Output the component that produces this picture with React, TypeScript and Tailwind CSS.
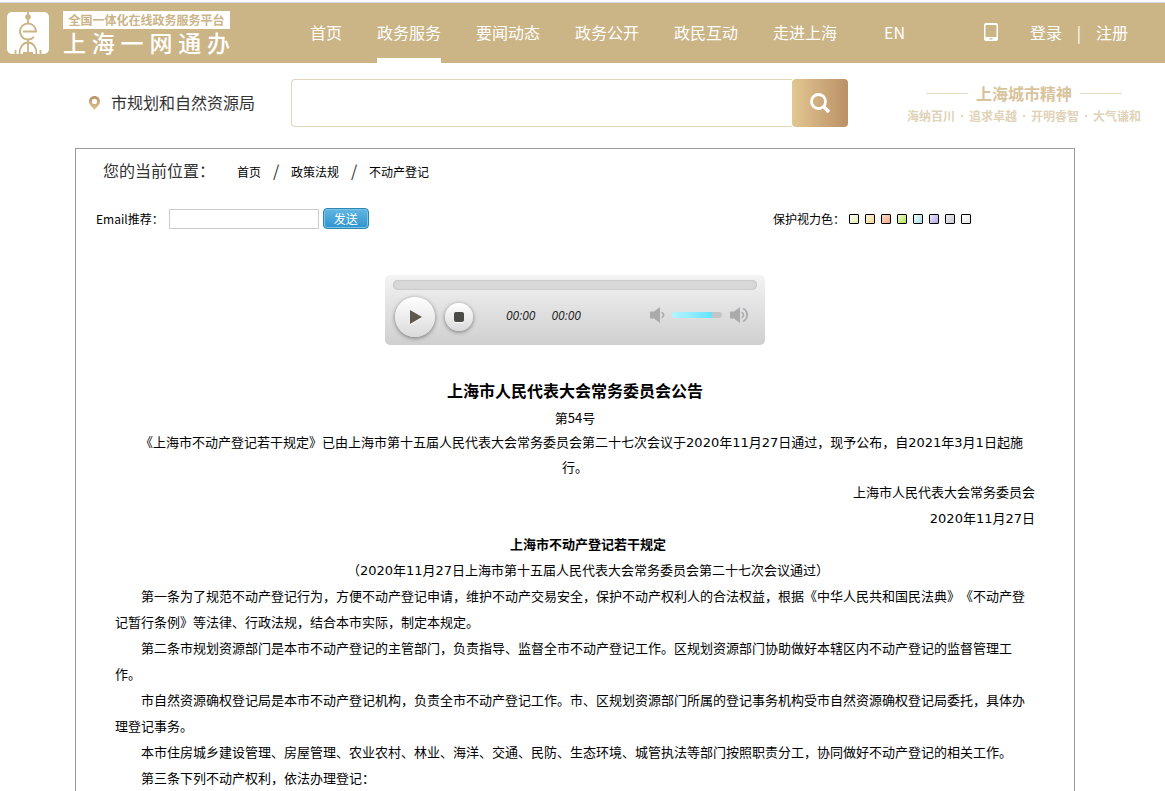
import React from "react";

const navItems = ["首页", "政务服务", "要闻动态", "政务公开", "政民互动", "走进上海"];

const mottoes = ["海纳百川", "追求卓越", "开明睿智", "大气谦和"];

const swatches = [
  { name: "豆绿", cls: "from-white to-[#e3eba6]" },
  { name: "浅黄", cls: "from-[#fdf3dc] to-[#f0d98c]" },
  { name: "浅橙", cls: "from-[#fbdccb] to-[#f4a888]" },
  { name: "草绿", cls: "from-[#f2fbd2] to-[#b4e04a]" },
  { name: "浅蓝", cls: "from-[#eefafa] to-[#a9dfe6]" },
  { name: "浅紫", cls: "from-[#eeeafa] to-[#b3a4e4]" },
  { name: "浅灰", cls: "from-[#eeeeee] to-[#c6c6d0]" },
  { name: "白色", cls: "from-white to-[#e6e6e6]" },
];

const articles = [
  "第一条为了规范不动产登记行为，方便不动产登记申请，维护不动产交易安全，保护不动产权利人的合法权益，根据《中华人民共和国民法典》《不动产登记暂行条例》等法律、行政法规，结合本市实际，制定本规定。",
  "第二条市规划资源部门是本市不动产登记的主管部门，负责指导、监督全市不动产登记工作。区规划资源部门协助做好本辖区内不动产登记的监督管理工作。",
  "市自然资源确权登记局是本市不动产登记机构，负责全市不动产登记工作。市、区规划资源部门所属的登记事务机构受市自然资源确权登记局委托，具体办理登记事务。",
  "本市住房城乡建设管理、房屋管理、农业农村、林业、海洋、交通、民防、生态环境、城管执法等部门按照职责分工，协同做好不动产登记的相关工作。",
  "第三条下列不动产权利，依法办理登记：",
];

function Logo() {
  return (
    <a href="#" className="flex items-center gap-[14px]">
      <svg width="42" height="42" viewBox="0 0 42 42" aria-hidden="true">
        <rect width="42" height="42" rx="5" fill="#fff" />
        <g fill="none" stroke="#cbb486" strokeWidth="1.8">
          <path d="M21 0v11" />
          <path d="M16 19.500h13a8 8 0 1 0-2 5.300" />
          <path d="M12.500 42c0-7 3.500-11.500 8.500-11.500S29.500 35 29.500 42M21 28v14M16 41h10M8.500 42v-4M33.500 42v-4" />
        </g>
        <circle cx="21" cy="5" r="2.800" fill="#cbb486" />
      </svg>
      <span className="flex w-[167px] flex-col text-white">
        <span className="bg-white text-center text-[12px] leading-[18px] font-bold text-[#cbb486]">
          全国一体化在线政务服务平台
        </span>
        <span className="text-[23px] leading-[26px] font-medium [text-align-last:justify]">上海一网通办</span>
      </span>
    </a>
  );
}

function Header() {
  return (
    <header className="mt-[2px] flex h-[61px] items-stretch border-t border-[#dcdce2] bg-[#cbb486] pr-[37px] pl-[7px] text-[16px] leading-[24px] text-white">
      <Logo />
      <nav className="ml-20 flex items-stretch gap-[35px]">
        {navItems.map((item, i) => (
          <a
            key={item}
            href="#"
            className={
              i === 1
                ? "flex items-center border-b-[5px] border-white pt-[3px] whitespace-nowrap"
                : "flex items-center pb-[2px] whitespace-nowrap"
            }
          >
            {item}
          </a>
        ))}
        <a href="#" className="ml-3 flex items-center pb-[2px]">
          EN
        </a>
      </nav>
      <div className="ml-auto flex items-center pb-[2px]">
        <a href="#" aria-label="手机版" className="mr-8">
          <svg width="14" height="18" viewBox="0 0 14 18" aria-hidden="true">
            <path
              fill="#fff"
              fillRule="evenodd"
              d="M2 0h10a2 2 0 0 1 2 2v14a2 2 0 0 1-2 2H2a2 2 0 0 1-2-2V2a2 2 0 0 1 2-2zM1.500 2v12h11V2zM5.500 15.200h3v1.300h-3z"
            />
          </svg>
        </a>
        <a href="#">登录</a>
        <span className="w-[34px] text-center">|</span>
        <a href="#">注册</a>
      </div>
    </header>
  );
}

function SearchRow() {
  return (
    <div className="flex items-center pt-4 pr-[9px] pb-[21px] pl-[88px]">
      <svg width="13" height="16" viewBox="0 0 13 16" aria-hidden="true">
        <defs>
          <linearGradient id="pin" x1="0" y1="0" x2="0" y2="1">
            <stop offset="0" stopColor="#ba9066" />
            <stop offset="1" stopColor="#dfc692" />
          </linearGradient>
        </defs>
        <path
          fill="url(#pin)"
          fillRule="evenodd"
          d="M6.500 1C3.300 1 1 3.400 1 6.300c0 3.400 3.500 6.200 5.500 8.700C8.500 12.500 12 9.700 12 6.300 12 3.400 9.700 1 6.500 1zm0 2.800a2.600 2.600 0 1 1 0 5.200 2.600 2.600 0 0 1 0-5.200z"
        />
      </svg>
      <span className="ml-[10px] pb-[2px] text-[16px] leading-[24px] whitespace-nowrap text-[#333]">
        市规划和自然资源局
      </span>
      <form className="ml-9 flex h-12 w-[557px]" onSubmit={(e) => e.preventDefault()}>
        <input
          aria-label="搜索"
          className="min-w-0 flex-1 rounded-l-[4px] border border-r-0 border-[#e3d5bb] bg-white px-3 text-[16px] outline-none"
        />
        <button
          aria-label="搜索"
          className="flex w-14 items-center justify-center rounded-[4px] bg-linear-to-r from-[#e2c792] to-[#ba9066]"
        >
          <svg width="22" height="22" viewBox="0 0 22 22" fill="none" stroke="#fff" aria-hidden="true">
            <circle cx="9.500" cy="9.500" r="7" strokeWidth="2.800" />
            <path d="M14.500 14.500l5.500 5.500" strokeWidth="3.500" />
          </svg>
        </button>
      </form>
      <div className="ml-auto flex flex-col items-center pt-[2px] font-bold whitespace-nowrap">
        <div className="flex items-center gap-2 text-[16px] leading-[24px] text-[#d8c49c]">
          <span className="h-px w-[42px] bg-[#e6dac0]" />
          上海城市精神
          <span className="h-px w-[42px] bg-[#e6dac0]" />
        </div>
        <ul className="flex items-center gap-[6px] text-[12px] leading-[22px] text-[#e0d3b8]">
          {mottoes.map((motto, i) => (
            <React.Fragment key={motto}>
              {i > 0 && <li aria-hidden="true" className="size-[2px] bg-[#e0d3b8]" />}
              <li>{motto}</li>
            </React.Fragment>
          ))}
        </ul>
      </div>
    </div>
  );
}

function Speaker({ loud }: { loud?: boolean }) {
  return (
    <svg width="20" height="16" viewBox="0 0 20 16" aria-hidden="true">
      <path d="M1 4.500h4l6-4.500v16l-6-4.500H1z" fill="#a9acae" />
      <g fill="none" stroke="#a9acae" strokeWidth="1.700">
        <path d="M12.500 5.200c2.800 1 2.800 4.600 0 5.600" />
        {loud && <path d="M14 1.500c5.500 2.500 5.500 10.500 0 13" />}
      </g>
    </svg>
  );
}

function Player() {
  return (
    <section
      aria-label="语音播放"
      className="mx-auto h-[70px] w-[380px] rounded-[5px] bg-linear-to-b from-[#f3f3f3] to-[#cfcfcf] px-2 pt-[5px]"
    >
      <input
        type="range"
        aria-label="播放进度"
        defaultValue={0}
        className="block h-[10px] w-full appearance-none rounded-full bg-[#d9d9d9] shadow-[inset_0_0_2px_#a8a8a8] [&::-webkit-slider-thumb]:size-0 [&::-webkit-slider-thumb]:appearance-none"
      />
      <div className="flex h-[54px] items-center pl-[2px]">
        <button
          aria-label="播放"
          className="flex size-10 items-center justify-center rounded-full bg-linear-to-b from-white to-[#dadada] shadow-[0_1px_4px_rgba(0,0,0,0.45)]"
        >
          <svg width="14" height="16" viewBox="0 0 14 16" className="ml-[2px]" aria-hidden="true">
            <path d="M1 2l12 7-12 7z" fill="#fff" />
            <path d="M1 1l12 7-12 7z" fill="#5c584e" />
          </svg>
        </button>
        <button
          aria-label="停止"
          className="ml-[10px] flex size-7 items-center justify-center rounded-full bg-linear-to-b from-white to-[#dadada] shadow-[0_1px_4px_rgba(0,0,0,0.45)]"
        >
          <span className="size-[10px] rounded-[2px] bg-[#4c4a46] shadow-[0_1px_0_#fff]" />
        </button>
        <div className="ml-[33px] flex gap-4 pb-[2px] font-['Open_Sans',sans-serif] text-[12px] leading-[18px] text-[#222] italic">
          <span>00:00</span>
          <span>00:00</span>
        </div>
        <div className="ml-auto flex items-center gap-[3px] pr-2 pb-[5px]">
          <Speaker />
          <input
            type="range"
            aria-label="音量"
            defaultValue={80}
            className="h-[6px] w-[50px] appearance-none rounded-full bg-linear-to-r from-[#b4f4ff] via-[#5fe4ff] via-80% to-[#c4c4c4] to-80% [&::-webkit-slider-thumb]:size-0 [&::-webkit-slider-thumb]:appearance-none"
          />
          <span className="ml-1">
            <Speaker loud />
          </span>
        </div>
      </div>
    </section>
  );
}

function Toolbar() {
  return (
    <div className="flex items-center pr-[103px] pl-5 text-[12px] leading-[20px]">
      <label htmlFor="email">Email推荐：</label>
      <input id="email" className="ml-[5px] h-5 w-[150px] border border-[#ccc] px-1 outline-none" />
      <button className="ml-1 h-[21px] w-[46px] rounded-[4px] border border-[#2b86b0] bg-linear-to-b from-[#62b6e2] to-[#2c93cf] text-[12px] leading-[19px] text-white shadow-[inset_0_0_0_1px_#7cc3e6]">
        发送
      </button>
      <div className="ml-auto flex items-center">
        <span>保护视力色：</span>
        <div className="ml-1 flex gap-[6px]">
          {swatches.map((s) => (
            <button
              key={s.name}
              aria-label={s.name}
              className={`size-[10px] rounded-[1px] border border-black bg-linear-to-br ${s.cls}`}
            />
          ))}
        </div>
      </div>
    </div>
  );
}

function Article() {
  return (
    <article className="px-[39px] pt-[30px] text-center text-[13px] leading-[26px] [text-spacing-trim:space-all]">
      <h1 className="text-[16px] leading-[30px] font-bold">上海市人民代表大会常务委员会公告</h1>
      <p className="leading-[25px]">第54号</p>
      <div className="font-['DejaVu_Sans','Noto_Sans_CJK_SC',sans-serif]">
        <p className="indent-[13px] leading-[25px]">
          《上海市不动产登记若干规定》已由上海市第十五届人民代表大会常务委员会第二十七次会议于2020年11月27日通过，现予公布，自2021年3月1日起施行。
        </p>
        <p className="text-right">上海市人民代表大会常务委员会</p>
        <p className="text-right">2020年11月27日</p>
        <h2 className="indent-[26px] font-bold">上海市不动产登记若干规定</h2>
        <p className="indent-[26px]">（2020年11月27日上海市第十五届人民代表大会常务委员会第二十七次会议通过）</p>
        <div className="text-left indent-[26px]">
          {articles.map((text) => (
            <p key={text}>{text}</p>
          ))}
        </div>
      </div>
    </article>
  );
}

export default function App() {
  return (
    <div
      lang="zh-CN"
      className="flex min-h-screen flex-col overflow-x-hidden bg-white font-['Noto_Sans_CJK_SC',sans-serif] text-black"
    >
      <Header />
      <div className="flex flex-1 flex-col pr-[15px]">
        <SearchRow />
        <main className="mx-auto w-full max-w-[1000px] flex-1 border border-b-0 border-[#999]">
          <nav aria-label="当前位置" className="flex items-baseline pt-[9px] pl-[27px] text-[12px] leading-[24px]">
            <span className="text-[16px] text-[#333]">您的当前位置：</span>
            <a href="#" className="ml-[22px]">
              首页
            </a>
            <span className="w-[30px] text-center text-[16px] text-[#333]">/</span>
            <a href="#">政策法规</a>
            <span className="w-[30px] text-center text-[16px] text-[#333]">/</span>
            <a href="#">不动产登记</a>
          </nav>
          <div className="pt-6 pb-[46px]">
            <Toolbar />
          </div>
          <Player />
          <Article />
        </main>
      </div>
    </div>
  );
}
